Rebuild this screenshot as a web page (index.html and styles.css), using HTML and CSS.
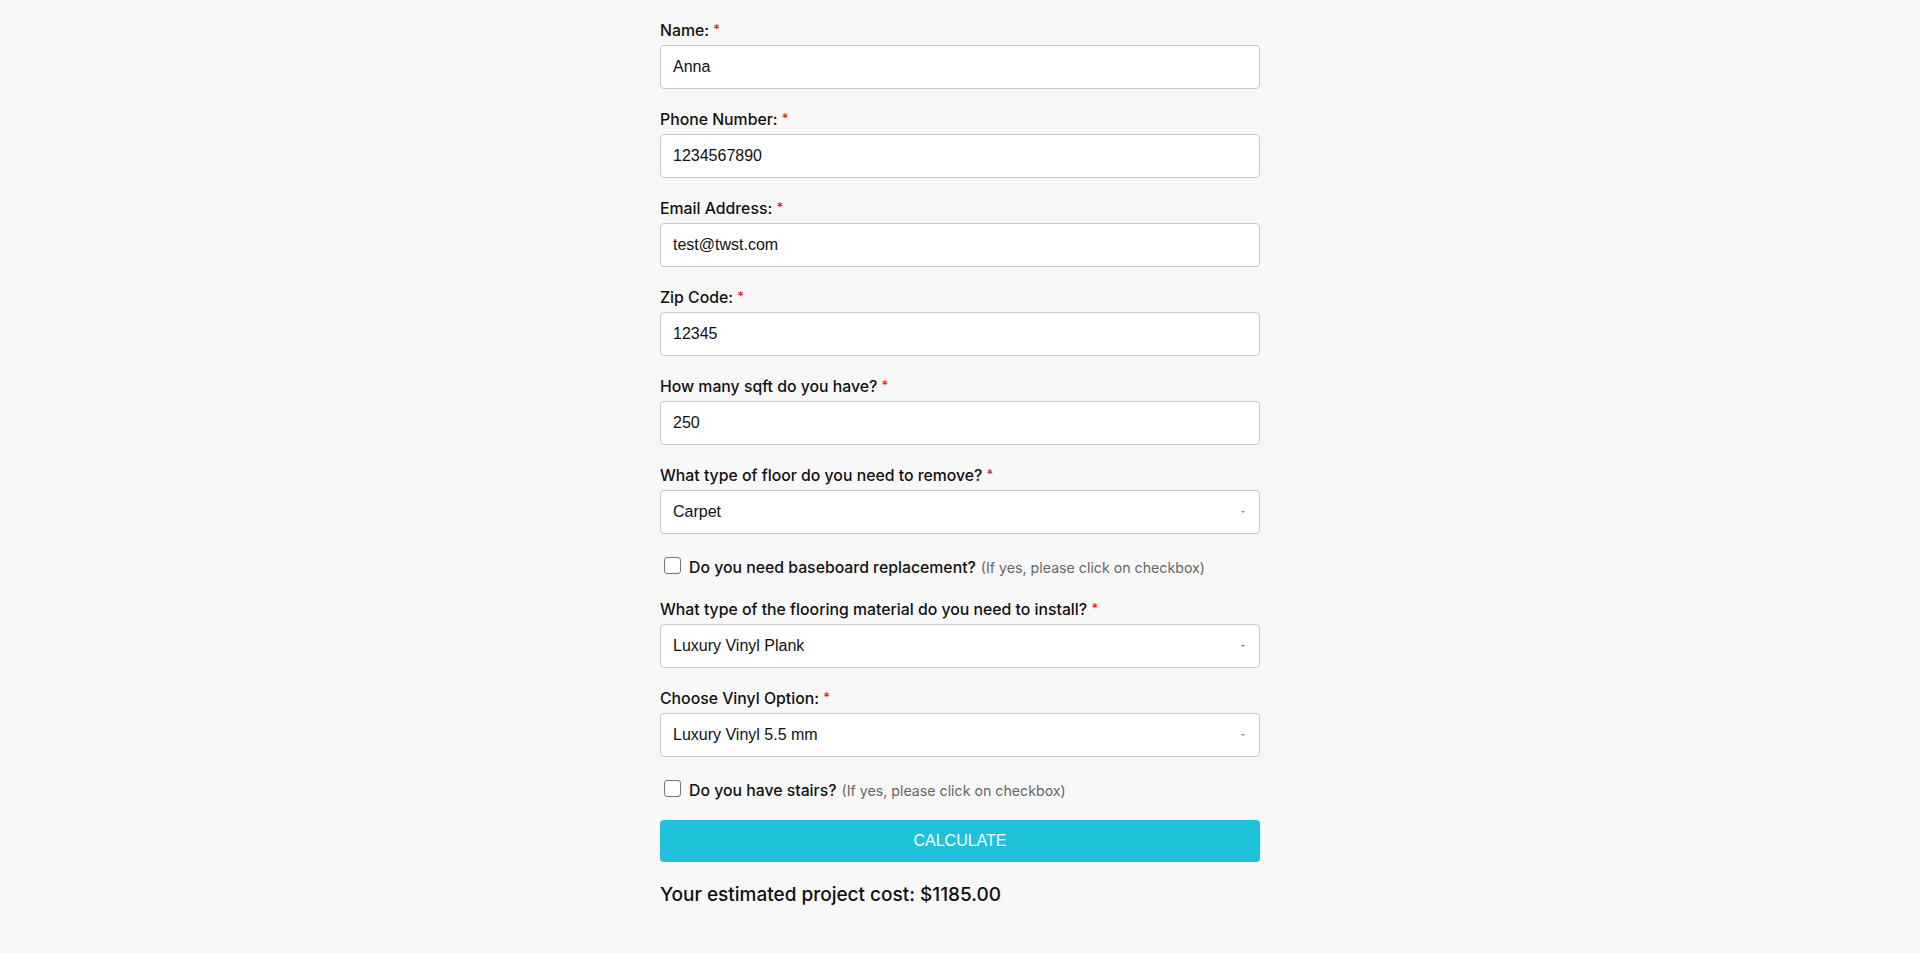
FILE: index.html
```html
<!DOCTYPE html>
<html lang="en">
<head>
<meta charset="utf-8">
<title>Flooring Estimate</title>
<link rel="stylesheet" href="styles.css">
</head>
<body>
<main class="form">
  <div class="field">
    <div class="label">Name: <span class="req">*</span></div>
    <div class="input">Anna</div>
  </div>
  <div class="field">
    <div class="label">Phone Number: <span class="req">*</span></div>
    <div class="input">1234567890</div>
  </div>
  <div class="field">
    <div class="label">Email Address: <span class="req">*</span></div>
    <div class="input">test@twst.com</div>
  </div>
  <div class="field">
    <div class="label">Zip Code: <span class="req">*</span></div>
    <div class="input">12345</div>
  </div>
  <div class="field">
    <div class="label">How many sqft do you have? <span class="req">*</span></div>
    <div class="input">250</div>
  </div>
  <div class="field">
    <div class="label">What type of floor do you need to remove? <span class="req">*</span></div>
    <div class="input select">Carpet</div>
  </div>
  <div class="check">
    <span class="box"></span>
    <span class="check-text">Do you need baseboard replacement?</span>
    <span class="hint">(If yes, please click on checkbox)</span>
  </div>
  <div class="field">
    <div class="label">What type of the flooring material do you need to install? <span class="req">*</span></div>
    <div class="input select">Luxury Vinyl Plank</div>
  </div>
  <div class="field">
    <div class="label">Choose Vinyl Option: <span class="req">*</span></div>
    <div class="input select">Luxury Vinyl 5.5 mm</div>
  </div>
  <div class="check">
    <span class="box"></span>
    <span class="check-text">Do you have stairs?</span>
    <span class="hint">(If yes, please click on checkbox)</span>
  </div>
  <div class="button">CALCULATE</div>
  <div class="result">Your estimated project cost: $1185.00</div>
</main>
</body>
</html>
```

FILE: styles.css
```css
html, body {
  margin: 0;
  padding: 0;
}
body {
  background: #f8f8f8;
  color: #111;
  font-family: "Inter", "Liberation Sans", sans-serif;
}
.form {
  width: 600px;
  margin: 0 auto;
  padding-top: 18px;
  display: flex;
  flex-direction: column;
}
.field {
  display: flex;
  flex-direction: column;
  margin-bottom: 18px;
}
.label {
  font-size: 15.8px;
  font-weight: 500;
  line-height: 26px;
  height: 26px;
  margin-bottom: 1px;
  color: #111;
}
.req {
  color: #e21b1b;
  font-size: 13px;
  line-height: 0;
  position: relative;
  top: -2px;
}
.input {
  position: relative;
  box-sizing: border-box;
  height: 44px;
  background: #fff;
  border: 1px solid #c8c8c8;
  border-radius: 4px;
  padding: 0 12px;
  display: flex;
  align-items: center;
  font-family: "Liberation Sans", Arial, sans-serif;
  font-size: 16px;
  color: #111;
}
.select::after {
  content: "";
  position: absolute;
  right: 14px;
  top: 50%;
  margin-top: -1px;
  border-left: 2.5px solid transparent;
  border-right: 2.5px solid transparent;
  border-top: 2.5px solid #888;
}
.check {
  height: 30px;
  margin-bottom: 15px;
  display: flex;
  align-items: center;
  padding-left: 4px;
}
.box {
  box-sizing: border-box;
  width: 17px;
  height: 17px;
  border: 1px solid #767676;
  border-radius: 3px;
  background: #fff;
  margin-right: 8px;
  margin-top: -4px;
}
.check-text {
  font-size: 15.8px;
  font-weight: 500;
  margin-right: 5px;
}
.hint {
  font-size: 14.2px;
  color: #666;
}
.button {
  height: 42px;
  background: #1fc1db;
  border-radius: 4px;
  color: #fff;
  display: flex;
  align-items: center;
  justify-content: center;
  font-family: "Liberation Sans", Arial, sans-serif;
  font-size: 16px;
}
.result {
  margin-top: 20px;
  font-size: 19px;
  font-weight: 500;
  line-height: 26px;
}
```
